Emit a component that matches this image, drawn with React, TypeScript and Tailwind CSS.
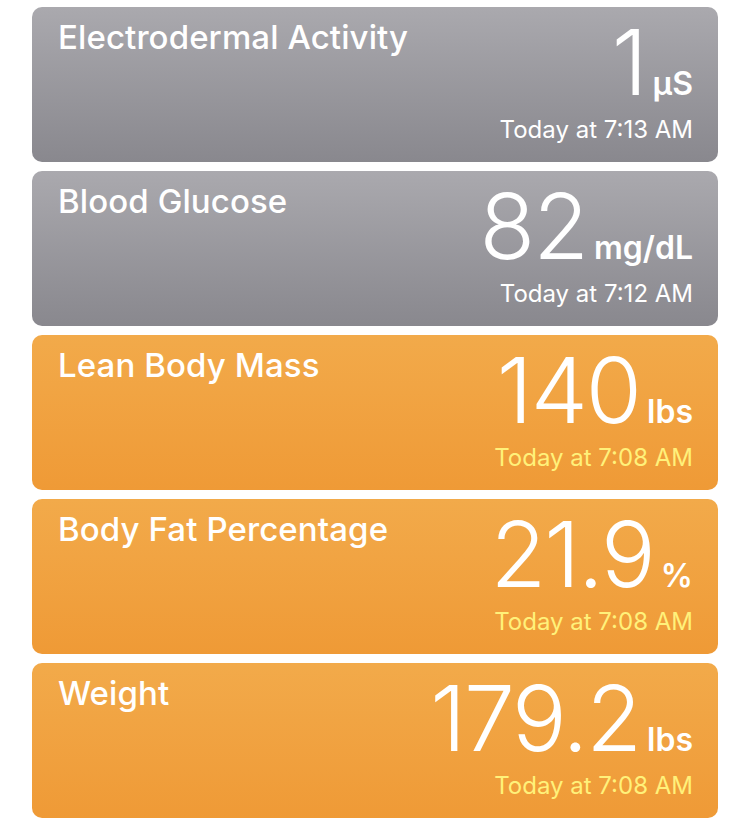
import React from "react";

type Reading = {
  title: string;
  value: string;
  unit: string;
  time: string;
  tone: "gray" | "orange";
};

const readings: Reading[] = [
  { title: "Electrodermal Activity", value: "1", unit: "µS", time: "Today at 7:13 AM", tone: "gray" },
  { title: "Blood Glucose", value: "82", unit: "mg/dL", time: "Today at 7:12 AM", tone: "gray" },
  { title: "Lean Body Mass", value: "140", unit: "lbs", time: "Today at 7:08 AM", tone: "orange" },
  { title: "Body Fat Percentage", value: "21.9", unit: "%", time: "Today at 7:08 AM", tone: "orange" },
  { title: "Weight", value: "179.2", unit: "lbs", time: "Today at 7:08 AM", tone: "orange" },
];

const ReadingCard: React.FC<{ reading: Reading }> = ({ reading }) => {
  const gray = reading.tone === "gray";
  return (
    <div
      className={
        "flex h-[155px] justify-between rounded-[10px] pl-[26px] pr-[25px] text-white " +
        (gray
          ? "bg-gradient-to-b from-[#aaa9ae] to-[#89888e]"
          : "bg-gradient-to-b from-[#f2aa4a] to-[#ef9a36]")
      }
    >
      <h2 className="pt-[10px] text-[33px] font-medium leading-[40px] tracking-[0.1px]">
        {reading.title}
      </h2>
      <div className="flex flex-col items-end">
        <div className="mt-[10px] flex items-baseline leading-none">
          <span className="text-[91px] font-light tracking-[-2px]">{reading.value}</span>
          <span className="ml-[7px] text-[32px] font-semibold">{reading.unit}</span>
        </div>
        <p
          className={
            "mt-[10px] text-[24px] leading-none " +
            (gray ? "text-white" : "text-[#fff17a]")
          }
        >
          {reading.time}
        </p>
      </div>
    </div>
  );
};

export default function App() {
  return (
    <div className="min-h-[829px] w-[750px] bg-white px-[32px] pt-[7px] font-['Inter',sans-serif]">
      <div className="flex flex-col gap-[9px]">
        {readings.map((r) => (
          <ReadingCard key={r.title} reading={r} />
        ))}
      </div>
    </div>
  );
}
